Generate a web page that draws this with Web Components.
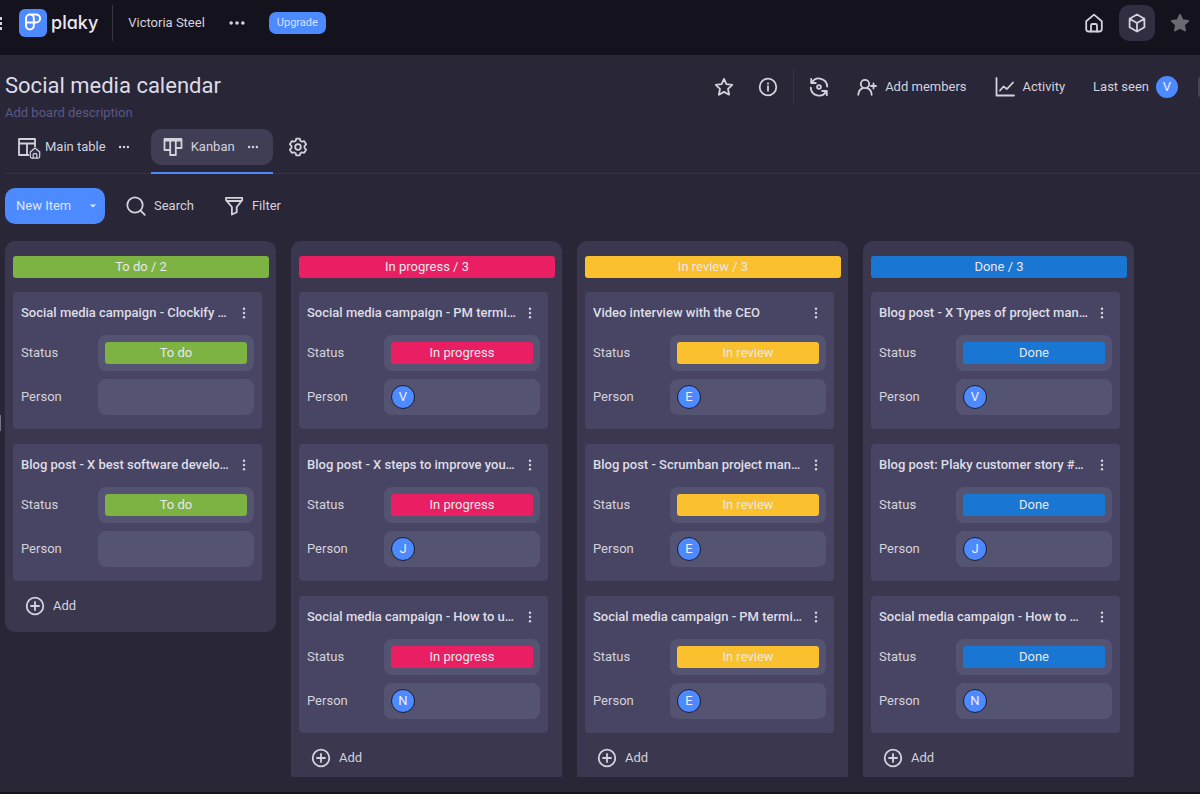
<!DOCTYPE html>
<html lang="en">
<head>
<meta charset="utf-8">
<meta name="viewport" content="width=device-width, initial-scale=1">
<title>Social media calendar</title>
<style>
  :root {
    --bg: #282637; --bar: #14121d; --column: #3a374e; --card: #474563; --field: #555372;
    --hover: #403e54; --line: #353347; --text: #d3d2dd; --muted: #5d5984; --accent: #4d8aff;
    --green: #7cb342; --pink: #e91e63; --yellow: #fbc02d; --blue: #1976d2;
  }
  body { margin: 0; background: var(--bg); color: var(--text); font: 13px/20px Roboto, "Liberation Sans", sans-serif; }
</style>
</head>
<body>
<plaky-app></plaky-app>
<script>
const BASE = `:host,*{box-sizing:border-box}
button,a{font:inherit;color:inherit;background:none;border:0;margin:0;padding:0;text-decoration:none;cursor:pointer;white-space:nowrap}`;

class Part extends HTMLElement {
  connectedCallback() {
    if (this.shadowRoot) return;
    const root = this.attachShadow({ mode: 'open' });
    root.innerHTML = `<style>${BASE}${this.styles()}</style>${this.view()}`;
  }
  styles() { return ':host{display:block}'; }
  view() { return '<slot></slot>'; }
  attr(name, fallback = '') { return this.getAttribute(name) ?? fallback; }
}

const ICONS = {
  grip: '<g fill="currentColor" stroke="none"><rect x="0" y="4" width="2" height="3"/><rect x="0" y="9" width="2" height="3"/><rect x="0" y="14" width="2" height="3"/></g>',
  home: '<path d="M2.200 8.200 10 1.600l7.800 6.600V16a2.500 2.500 0 0 1-2.500 2.500H4.700A2.500 2.500 0 0 1 2.200 16Z"/><path d="M7 18.500V12.500a1.500 1.500 0 0 1 1.500-1.500h3a1.500 1.500 0 0 1 1.500 1.500v6"/>',
  cube: '<path d="M10 1.500 17.400 5.700v8.600L10 18.500 2.600 14.300V5.700ZM2.600 5.700 10 10l7.400-4.300M10 10v8.500"/>',
  starFill: '<path fill="currentColor" d="m10 1.800 2.500 5.300 5.800.700-4.300 4 1.100 5.700L10 14.700l-5.100 2.800L6 11.800l-4.300-4 5.800-.700Z"/>',
  star: '<path d="m10 1.900 2.400 5.300 5.900.700-4.300 4 1.100 5.800L10 14.900l-5.100 2.800L6 11.900l-4.300-4 5.900-.700Z"/>',
  info: '<circle cx="10" cy="10" r="8.300"/><path d="M10 9.200v4.600"/><circle cx="10" cy="6.500" r="1.100" fill="currentColor" stroke="none"/>',
  sync: '<path d="M2.800 5.800A8.200 8.200 0 0 1 18.200 9.600M1.800 10.600a8.200 8.200 0 0 0 15.400 3.600M2.200 1.800v4.200h4.600M17.800 18.200V14h-4.600"/><circle cx="10" cy="10" r="1.900"/>',
  member: '<circle cx="8" cy="7" r="4.200"/><path d="M1.300 17.800c.300-3.800 2.300-6 4.700-6.700M10 11.100c2.700.800 4.500 3 4.700 6.700M16.500 6.500v5M14 9h5"/>',
  chart: '<path d="M1.500 1v17.500H19"/><path d="m5 13.500 3.500-4 3.500 2.500 6-6.500"/>',
  table: '<path d="M2 2h16v16H2ZM2 6.500h16M10 6.500V18"/>',
  kanban: '<path d="M1.500 2h17v9h-5.700v7H7.200v-5H1.500ZM1.500 3.500h17M7.200 2v11M12.800 2v10"/>',
  gear: '<path d="m8.300 1.600-.6 2.200-1.600.9-2.300-.6-1.900 3.200 1.600 1.700v2l-1.600 1.700 1.900 3.200 2.300-.6 1.600.9.600 2.200h3.400l.6-2.200 1.600-.9 2.300.6 1.900-3.200-1.600-1.700V9l1.600-1.700-1.900-3.200-2.300.6-1.600-.9-.6-2.200Z"/><circle cx="10" cy="10" r="2.800"/>',
  search: '<circle cx="9" cy="9" r="7.700"/><path d="m14.600 14.600 4.200 4.200"/>',
  filter: '<path d="M2 1.800h16.200v2.400L12.700 11v5.200L7.900 18.500V11L2 4.200ZM2.600 5h15"/>',
  plus: '<circle cx="10" cy="10" r="8.300"/><path d="M10 6v8M6 10h8"/>',
  dots: '<g fill="currentColor" stroke="none"><circle cx="3.500" cy="10" r="2"/><circle cx="10" cy="10" r="2"/><circle cx="16.500" cy="10" r="2"/></g>',
  kebab: '<g fill="currentColor" stroke="none"><circle cx="10" cy="3" r="2"/><circle cx="10" cy="10" r="2"/><circle cx="10" cy="17" r="2"/></g>',
  caret: '<path d="M2 6h16l-8 8Z" fill="currentColor" stroke="none"/>',
  logo: '<rect width="20" height="20" rx="4.300" fill="#4d8aff" stroke="none"/><path stroke="#fff" stroke-width="1.400" d="M10.600 6.800a2.800 2.800 0 0 0-5.600 0v5a2.800 2.800 0 0 0 5.600 0ZM5 9.700h7.200a2.850 2.850 0 0 0 0-5.700H7.800"/>'
};

class UiIcon extends Part {
  styles() { return `:host{display:block;flex:none;width:${this.attr('size', 20)}px;height:${this.attr('size', 20)}px}svg{display:block;width:100%;height:100%;overflow:visible}`; }
  view() {
    return `<svg viewBox="0 0 20 20" fill="none" stroke="currentColor" stroke-width="${this.attr('weight', '1.8')}" stroke-linejoin="round" stroke-linecap="round" aria-hidden="true">${ICONS[this.attr('name')]}</svg>`;
  }
}

class UiAction extends Part {
  styles() { return `:host{display:block;flex:none}button{display:flex;align-items:center;gap:8px;height:36px}`; }
  view() {
    return `<button type="button" aria-label="${this.attr('label')}"><ui-icon name="${this.attr('icon')}"></ui-icon><slot></slot></button>`
      .replace(' aria-label=""', '');
  }
}

class UiDivider extends Part {
  styles() { return ':host{display:block;flex:none;width:1px;height:36px;background:var(--line)}'; }
  view() { return ''; }
}

class UserAvatar extends Part {
  styles() { return ':host{display:flex;flex:none;align-items:center;justify-content:center;width:22px;height:22px;border-radius:50%;background:var(--accent);color:#eef;line-height:20px}:host([ringed]){width:24px;height:24px;border:1px solid #1c1a28}'; }
}

class TopBar extends Part {
  styles() { return `
    :host{display:flex;flex:none;align-items:center;height:55px;padding-bottom:9px;background:var(--bar);overflow:hidden}
    .logo{display:flex;align-items:center;gap:4px;margin:0 14px 0 17px;font:500 18px/28px Inter,Lato,sans-serif;font-feature-settings:"cv11";color:#e9e8f0}
    .grip{width:2px;overflow:hidden}
    .team{margin:0 23px 0 15px}
    .more{margin-right:23px}
    .upgrade{height:22px;padding:0 8px;border-radius:7px;background:var(--accent);font-size:11px;line-height:22px;color:#d6e2ff}
    nav{display:flex;align-items:center;margin-left:auto}
    .cube{display:flex;align-items:center;justify-content:center;width:36px;height:36px;margin:0 15px;border-radius:10px;background:#302e40}
    .fav{margin-right:10px;color:#6a6a72}`; }
  view() { return `
    <button class="grip" aria-label="Apps"><ui-icon name="grip"></ui-icon></button>
    <a class="logo" href="#"><ui-icon name="logo" size="28"></ui-icon>plaky</a>
    <ui-divider></ui-divider>
    <a class="team" href="#">Victoria Steel</a>
    <button class="more" aria-label="Team options"><ui-icon name="dots" size="18"></ui-icon></button>
    <button class="upgrade">Upgrade</button>
    <nav><button aria-label="Home"><ui-icon name="home"></ui-icon></button>
    <button class="cube" aria-label="Boards"><ui-icon name="cube"></ui-icon></button>
    <button class="fav" aria-label="Favorites"><ui-icon name="starFill"></ui-icon></button></nav>`; }
}

class BoardHeader extends Part {
  styles() { return `
    :host{display:flex;flex:none;justify-content:space-between;padding:14px 0 6px 5px}
    h1{margin:0;font-size:22px;line-height:34px;font-weight:400;color:#dddce6;white-space:nowrap}
    .desc{display:block;color:var(--muted);line-height:20px}
    .actions{display:flex;align-items:center;height:36px}
    .seen{display:flex;align-items:center;gap:7px;margin-right:20px}
    .edge{width:2px;height:20px;border-radius:4px 0 0 4px;background:#454358}`; }
  view() { return `
    <div><h1>Social media calendar</h1><button class="desc">Add board description</button></div>
    <div class="actions">
      <ui-action icon="star" label="Favorite" style="margin-right:24px"></ui-action>
      <ui-action icon="info" label="Board info" style="margin-right:15px"></ui-action>
      <ui-divider></ui-divider>
      <ui-action icon="sync" label="Automations" style="margin:0 28px 0 15px"></ui-action>
      <ui-action icon="member" style="margin-right:28px">Add members</ui-action>
      <ui-action icon="chart" style="margin-right:28px">Activity</ui-action>
      <button class="seen">Last seen <user-avatar>V</user-avatar></button>
      <span class="edge"></span>
    </div>`; }
}

class BoardTabs extends Part {
  styles() { return `
    :host{display:flex;flex:none;margin-left:5px;height:45px;border-bottom:1px solid var(--line)}
    .tab{height:45px;margin-bottom:-1px;border-bottom:2px solid transparent;padding-bottom:7px}
    .tab.on{border-color:var(--accent)}
    .tab div{display:flex;align-items:center;height:36px;padding:0 12px;border-radius:10px}
    .on div{background:var(--hover)}
    .first{margin-right:9px}
    .tab .name{margin:0 12px 0 8px}
    .tab.on div{padding-right:14px}
    .pic{position:relative}
    .badge{position:absolute;left:12px;top:10px;border-radius:4px;background:#302e45}
    .set{height:36px;margin-left:15px}`; }
  view() { return `
    <div class="tab first"><div><span class="pic"><ui-icon name="table"></ui-icon><ui-icon class="badge" name="home" size="12" weight="2"></ui-icon></span><button class="name">Main table</button><button aria-label="Main table options"><ui-icon name="dots" size="12"></ui-icon></button></div></div>
    <div class="tab on"><div><ui-icon name="kanban"></ui-icon><button class="name">Kanban</button><button aria-label="Kanban options"><ui-icon name="dots" size="12"></ui-icon></button></div></div>
    <button class="set" aria-label="View settings"><ui-icon name="gear"></ui-icon></button>`; }
}

class BoardToolbar extends Part {
  styles() { return `
    :host{display:flex;flex:none;align-items:center;padding:14px 5px 17px}
    .new{display:flex;align-items:center;justify-content:space-between;width:100px;height:36px;padding:0 8px 0 11px;border-radius:10px;background:var(--accent);color:#dbe6ff;margin-right:21px}`; }
  view() { return `
    <button class="new">New Item<ui-icon name="caret" size="8"></ui-icon></button>
    <ui-action icon="search" style="margin-right:30px">Search</ui-action>
    <ui-action icon="filter">Filter</ui-action>`; }
}

class StatusPill extends Part {
  styles() { return `:host{display:block}button{display:block;width:100%;height:22px;border-radius:3px;background:var(--${this.attr('tone')});color:#e8e8ee;text-align:center;line-height:22px}`; }
  view() { return '<button type="button"><slot></slot></button>'; }
}

class KanbanCard extends Part {
  styles() { return `
    :host{display:block;padding:0 8px 14px;border-radius:4px;background:var(--card)}
    header{display:flex;align-items:center;justify-content:space-between;height:41px;margin-bottom:2px;padding-right:4px}
    h3{margin:0;font-size:13px;line-height:20px;font-weight:500;white-space:nowrap;color:#dedde7}
    dl{display:grid;grid-template-columns:77px 1fr;row-gap:8px;align-items:center;margin:0}
    dd{display:flex;align-items:center;height:36px;margin:0;padding:0 7px;border-radius:8px;background:var(--field)}
    status-pill{flex:1}`; }
  view() {
    const who = this.attr('person');
    return `
    <header><h3><slot></slot></h3><button aria-label="Item options"><ui-icon name="kebab" size="12"></ui-icon></button></header>
    <dl><dt>Status</dt><dd><status-pill tone="${this.attr('tone')}">${this.attr('status')}</status-pill></dd>
    <dt>Person</dt><dd>${who ? `<user-avatar ringed>${who}</user-avatar>` : ''}</dd></dl>`;
  }
}

class KanbanColumn extends Part {
  styles() { return `
    :host{display:block;flex:none;width:271px;padding:15px 7px 7px 8px;border-radius:10px;background:var(--column)}
    h2{margin:0 0 14px;height:22px;border-radius:3px;background:var(--${this.attr('tone')});color:#e8e8ee;font-size:13px;font-weight:400;line-height:22px;text-align:center}
    .list{display:grid;gap:15px;padding-right:7px}
    ui-action{margin:7px 0 1px 12px}`; }
  view() { return `
    <h2>${this.attr('status')} / ${this.attr('count')}</h2>
    <div class="list"><slot></slot></div>
    <ui-action icon="plus">Add</ui-action>`; }
}

const COLUMNS = [
  ['To do', 'green', [['Social media campaign - Clockify …', ''], ['Blog post - X best software develo…', '']]],
  ['In progress', 'pink', [['Social media campaign - PM termi…', 'V'], ['Blog post - X steps to improve you…', 'J'], ['Social media campaign - How to u…', 'N']]],
  ['In review', 'yellow', [['Video interview with the CEO', 'E'], ['Blog post - Scrumban project man…', 'E'], ['Social media campaign - PM termi…', 'E']]],
  ['Done', 'blue', [['Blog post - X Types of project man…', 'V'], ['Blog post: Plaky customer story #…', 'J'], ['Social media campaign - How to …', 'N']]]
];

class KanbanBoard extends Part {
  styles() { return ':host{display:flex;flex:1;min-height:0;align-items:flex-start;gap:15px;margin:0 5px 15px;overflow:hidden;border-radius:2px}'; }
  view() {
    return COLUMNS.map(([status, tone, cards]) => `<kanban-column status="${status}" tone="${tone}" count="${cards.length}">${
      cards.map(([title, person]) => `<kanban-card status="${status}" tone="${tone}" person="${person}">${title}</kanban-card>`).join('')
    }</kanban-column>`).join('');
  }
}

class PlakyApp extends Part {
  styles() { return `
    :host{display:flex;flex-direction:column;height:100vh;border-bottom:2px solid var(--bar);overflow:hidden}
    main{position:relative;display:flex;flex:1;flex-direction:column;min-height:0}
    .handle{position:absolute;left:0;top:360px;width:1px;height:16px;background:#77758a}`; }
  view() { return `<top-bar></top-bar><main><board-header></board-header><board-tabs></board-tabs><board-toolbar></board-toolbar><kanban-board></kanban-board><span class="handle"></span></main>`; }
}

Object.entries({
  'ui-icon': UiIcon, 'ui-action': UiAction, 'ui-divider': UiDivider, 'user-avatar': UserAvatar, 'top-bar': TopBar,
  'board-header': BoardHeader, 'board-tabs': BoardTabs, 'board-toolbar': BoardToolbar, 'status-pill': StatusPill,
  'kanban-card': KanbanCard, 'kanban-column': KanbanColumn, 'kanban-board': KanbanBoard, 'plaky-app': PlakyApp
}).forEach(([tag, cls]) => customElements.define(tag, cls));
</script>
</body>
</html>
